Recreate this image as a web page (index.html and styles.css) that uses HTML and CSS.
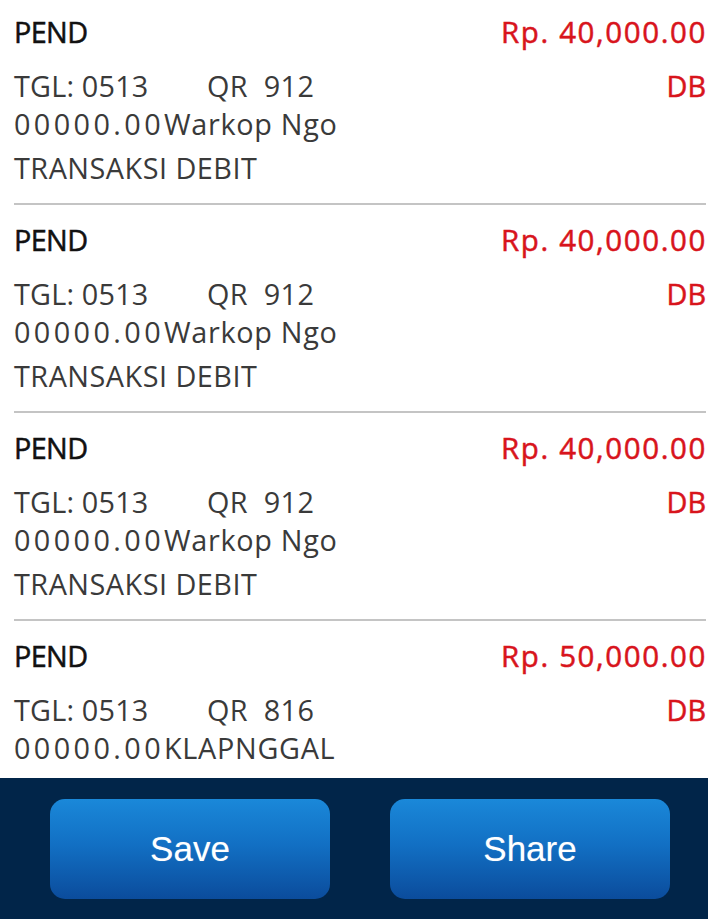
FILE: index.html
```html
<!DOCTYPE html>
<html>
<head>
<meta charset="utf-8">
<link rel="stylesheet" href="styles.css">
</head>
<body>
<div class="screen">
  <div class="list">
    <div class="txn">
      <div class="head"><span class="status">PEND</span><span class="amount">Rp. 40,000.00</span></div>
      <div class="line"><span class="date">TGL: 0513</span><span class="ref">QR  912</span><span class="type">DB</span></div>
      <div class="line"><span class="num">00000.00</span><span class="merchant">Warkop Ngo</span></div>
      <div class="line desc">TRANSAKSI DEBIT</div>
    </div>
    <div class="txn">
      <div class="head"><span class="status">PEND</span><span class="amount">Rp. 40,000.00</span></div>
      <div class="line"><span class="date">TGL: 0513</span><span class="ref">QR  912</span><span class="type">DB</span></div>
      <div class="line"><span class="num">00000.00</span><span class="merchant">Warkop Ngo</span></div>
      <div class="line desc">TRANSAKSI DEBIT</div>
    </div>
    <div class="txn">
      <div class="head"><span class="status">PEND</span><span class="amount">Rp. 40,000.00</span></div>
      <div class="line"><span class="date">TGL: 0513</span><span class="ref">QR  912</span><span class="type">DB</span></div>
      <div class="line"><span class="num">00000.00</span><span class="merchant">Warkop Ngo</span></div>
      <div class="line desc">TRANSAKSI DEBIT</div>
    </div>
    <div class="txn">
      <div class="head"><span class="status">PEND</span><span class="amount">Rp. 50,000.00</span></div>
      <div class="line"><span class="date">TGL: 0513</span><span class="ref">QR  816</span><span class="type">DB</span></div>
      <div class="line"><span class="num">00000.00</span><span class="merchant">KLAPNGGAL</span></div>
    </div>
  </div>
  <div class="actions">
    <button class="btn">Save</button>
    <button class="btn">Share</button>
  </div>
</div>
</body>
</html>
```
FILE: styles.css
```css
html, body {
  margin: 0;
  padding: 0;
  background: #ffffff;
}

.screen {
  width: 708px;
  height: 919px;
  display: flex;
  flex-direction: column;
  overflow: hidden;
}

.list {
  height: 778px;
  overflow: hidden;
  flex: none;
}

.txn {
  margin: 0 2px 0 14px;
  padding: 16px 0 16px 0;
  border-bottom: 2px solid #c4c4c4;
  font-family: "Open Sans", "Noto Sans", sans-serif;
  font-size: 28.8px;
  line-height: 38px;
  color: #3a3a3a;
}

.txn:first-child {
  padding-top: 13px;
}

.txn:last-child {
  border-bottom: none;
}

.head {
  display: flex;
  justify-content: space-between;
  margin-bottom: 16px;
}

.status {
  color: #111111;
  -webkit-text-stroke: 0.5px #111111;
  letter-spacing: -0.6px;
}

.amount {
  color: #d8141c;
  -webkit-text-stroke: 0.5px #d8141c;
  font-size: 29.5px;
  letter-spacing: 1.6px;
  margin-right: -1px;
}

.line {
  display: flex;
  white-space: pre;
}

.date {
  width: 193px;
  flex: none;
  letter-spacing: 0.2px;
}

.ref {
  flex: 1;
  letter-spacing: 0.4px;
}

.type {
  color: #d8141c;
  -webkit-text-stroke: 0.5px #d8141c;
}

.num {
  letter-spacing: 3.4px;
}

.merchant {
  letter-spacing: 0.7px;
}

.desc {
  margin-top: 6px;
  letter-spacing: 0.5px;
}

.actions {
  flex: 1;
  background: #012549;
  display: flex;
  gap: 60px;
  padding: 21px 38px 20px 50px;
}

.btn {
  width: 280px;
  height: 100px;
  border: none;
  border-radius: 15px;
  background: linear-gradient(to bottom, #1a88d9 0%, #1270c4 45%, #0b4c9c 100%);
  color: #ffffff;
  font-family: "Liberation Sans", Arial, sans-serif;
  font-size: 35px;
  padding: 0;
  text-shadow: 0 0 1px rgba(255, 255, 255, 0.4);
}
```
